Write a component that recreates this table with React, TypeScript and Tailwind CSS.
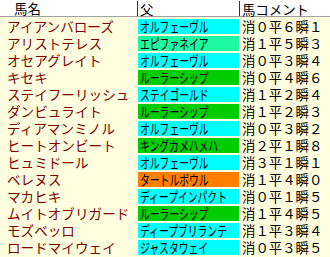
import React from 'react';

type Horse = {
    name: string;
    sire: string;
    color: string; // sire cell colour
    comment: string;
};

const horses: Horse[] = [
    { name: 'アイアンバローズ', sire: 'オルフェーヴル', color: 'bg-[#00ffff]', comment: '消０平６瞬１' },
    { name: 'アリストテレス', sire: 'エピファネイア', color: 'bg-[#1ef8a0]', comment: '消１平５瞬３' },
    { name: 'オセアグレイト', sire: 'オルフェーヴル', color: 'bg-[#00ffff]', comment: '消０平３瞬４' },
    { name: 'キセキ', sire: 'ルーラーシップ', color: 'bg-[#00cc00]', comment: '消０平４瞬６' },
    { name: 'ステイフーリッシュ', sire: 'ステイゴールド', color: 'bg-[#00ffff]', comment: '消１平２瞬４' },
    { name: 'ダンビュライト', sire: 'ルーラーシップ', color: 'bg-[#00cc00]', comment: '消１平２瞬３' },
    { name: 'ディアマンミノル', sire: 'オルフェーヴル', color: 'bg-[#00ffff]', comment: '消０平３瞬２' },
    { name: 'ヒートオンビート', sire: 'キングカメハメハ', color: 'bg-[#00cc00]', comment: '消２平１瞬８' },
    { name: 'ヒュミドール', sire: 'オルフェーヴル', color: 'bg-[#00ffff]', comment: '消３平１瞬１' },
    { name: 'ベレヌス', sire: 'タートルボウル', color: 'bg-[#ff8000]', comment: '消１平４瞬０' },
    { name: 'マカヒキ', sire: 'ディープインパクト', color: 'bg-[#00ffff]', comment: '消０平１瞬５' },
    { name: 'ムイトオブリガード', sire: 'ルーラーシップ', color: 'bg-[#00cc00]', comment: '消１平４瞬５' },
    { name: 'モズベッロ', sire: 'ディープブリランテ', color: 'bg-[#00ffff]', comment: '消１平３瞬４' },
    { name: 'ロードマイウェイ', sire: 'ジャスタウェイ', color: 'bg-[#00ffff]', comment: '消０平３瞬５' },
];

const font = "font-['Noto_Sans_CJK_JP','Noto_Sans_CJK_SC',sans-serif]";

export default function App() {
    return (
        <div className={`w-[330px] h-[257px] overflow-hidden bg-[#ffffe0] ${font}`}>
            {/* header */}
            <div className="flex h-[17px] bg-white border-b border-[#a0a0a0] text-[13.4px] leading-[16px] text-black whitespace-nowrap">
                <div className="w-[137px] pl-[14px]">馬名</div>
                <div className="w-[102px] border-l border-[#333] pl-[2px] mt-[1px]">父</div>
                <div className="flex-1 border-l border-[#333] pl-[2px] mt-[1px]">馬コメント</div>
            </div>

            {/* rows */}
            <div className="flex flex-col pt-[1px]">
                {horses.map((h) => (
                    <div key={h.name} className="flex h-[17px] items-stretch whitespace-nowrap">
                        <div className="w-[138px] pl-[7px] flex items-center text-[13.6px] leading-[15px] text-[#800000]">
                            {h.name}
                        </div>
                        <div className={`w-[101px] my-[1px] ${h.color} pl-[2px] flex items-center text-[14px] leading-[15px] text-black overflow-hidden`}>
                            {/* sire names are narrow (proportional kana) in the original */}
                            <span className="inline-block origin-left scale-x-[0.7]">{h.sire}</span>
                        </div>
                        <div className="flex-1 pl-[3px] flex items-center text-[13.4px] leading-[15px] text-black">
                            {h.comment}
                        </div>
                    </div>
                ))}
            </div>
        </div>
    );
}
